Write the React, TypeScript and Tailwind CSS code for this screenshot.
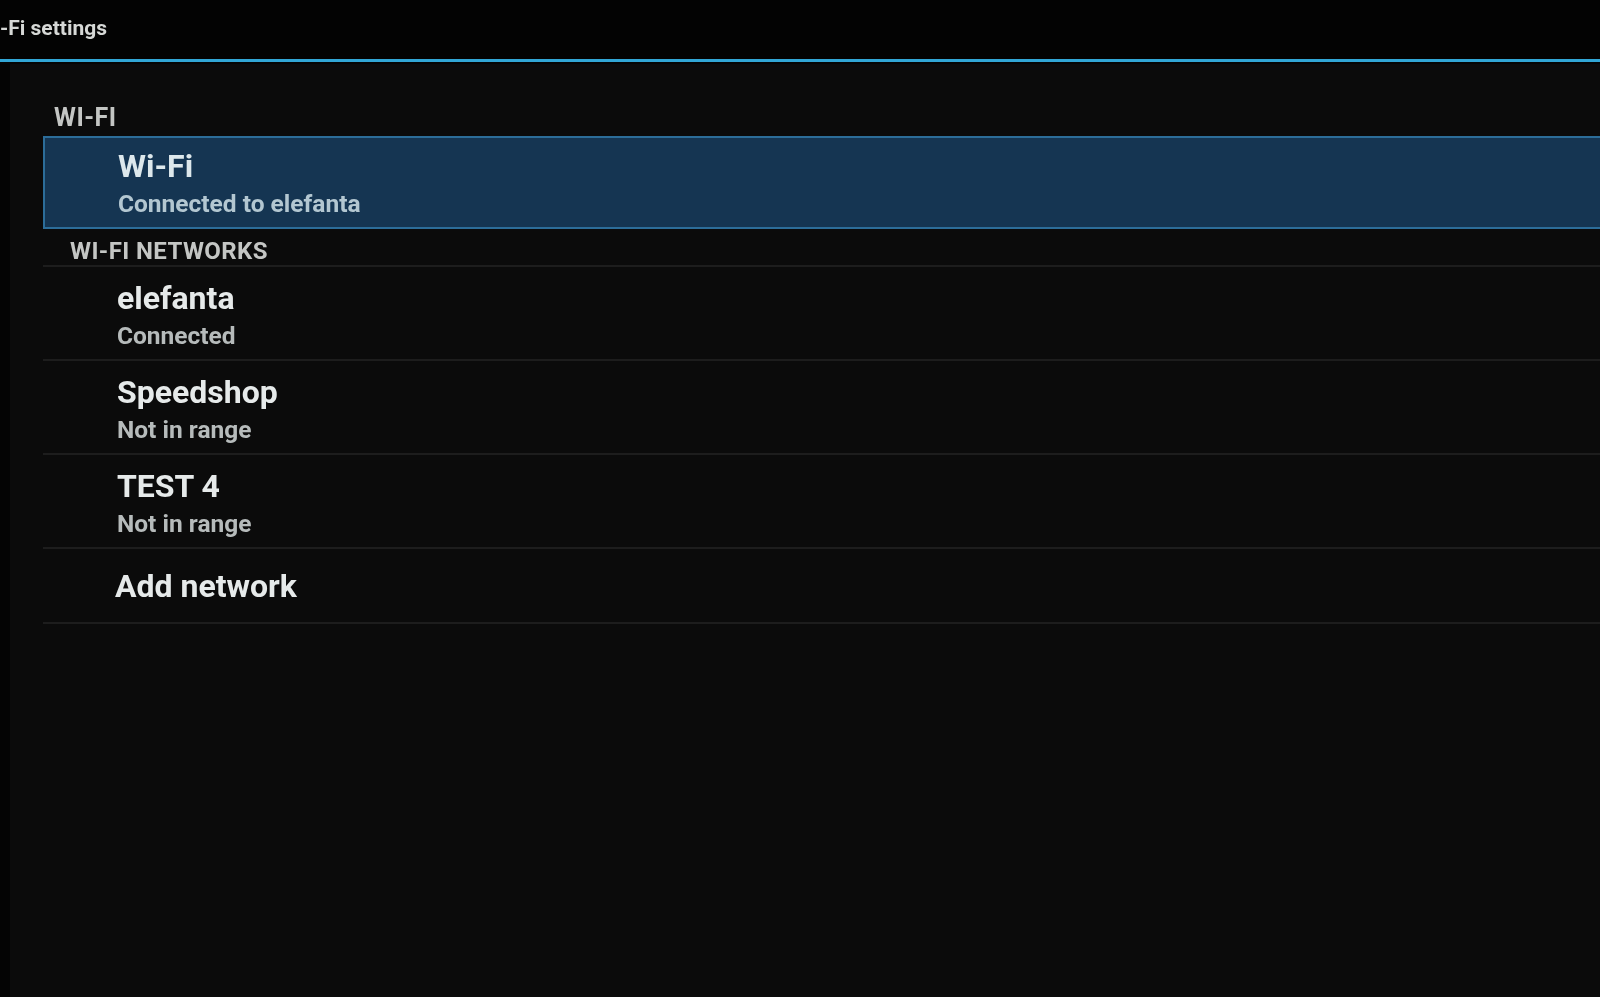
import React from "react";

const font = { fontFamily: "Roboto, 'Open Sans', 'Liberation Sans', sans-serif" };

function Row({ title, sub }: { title: string; sub?: string }) {
  return (
    <>
      {sub ? (
        <div className="flex h-[92px] flex-col pl-[74px] pt-[13px]">
          <div className="text-[32px] font-bold leading-[36px] text-[#e6eaea]">{title}</div>
          <div className="mt-[5px] text-[24.5px] font-bold leading-[30px] text-[#b6bbbb]">{sub}</div>
        </div>
      ) : (
        <div className="flex h-[73px] flex-col pl-[72px] pt-[19px]">
          <div className="text-[32px] font-bold leading-[36px] text-[#e6eaea]">{title}</div>
        </div>
      )}
      <div className="h-[2px] bg-[#1d1d1d]" />
    </>
  );
}

export default function App() {
  return (
    <div className="flex h-[997px] w-[1600px] flex-col overflow-hidden bg-[#0b0b0b] blur-[0.7px]" style={font}>
      {/* Action bar */}
      <div className="flex h-[59px] items-center bg-[#030303]">
        <div className="pb-[4px] text-[21px] font-bold leading-[24px] text-[#d6d8d6]">-Fi settings</div>
      </div>
      <div className="h-[3px] bg-[#31a6d6]" />
      <div className="h-[2px] bg-[#050505]" />

      <div className="flex flex-1">
        <div className="w-[10px] bg-[#040404]" />
        <div className="flex flex-1 flex-col pl-[33px]">
          <div className="ml-[11px] pt-[42px] text-[25px] font-bold leading-[24px] tracking-[0.5px] text-[#c4c6c4]">WI-FI</div>

          <div className="mt-[6px] h-[93px] border-2 border-r-0 border-[#2c6d99] bg-[#153552] pl-[73px] pt-[10px]">
            <div className="text-[32px] font-bold leading-[36px] text-[#dde8ec]">Wi-Fi</div>
            <div className="mt-[5px] text-[24.5px] font-bold leading-[30px] text-[#b3c7d1]">Connected to elefanta</div>
          </div>

          <div className="ml-[27px] mt-[10px] text-[24px] font-bold leading-[24px] tracking-[0.4px] text-[#c4c6c4]">WI-FI NETWORKS</div>
          <div className="mt-[2px] h-[2px] bg-[#1d1d1d]" />

          <Row title="elefanta" sub="Connected" />
          <Row title="Speedshop" sub="Not in range" />
          <Row title="TEST 4" sub="Not in range" />
          <Row title="Add network" />
        </div>
      </div>
    </div>
  );
}
